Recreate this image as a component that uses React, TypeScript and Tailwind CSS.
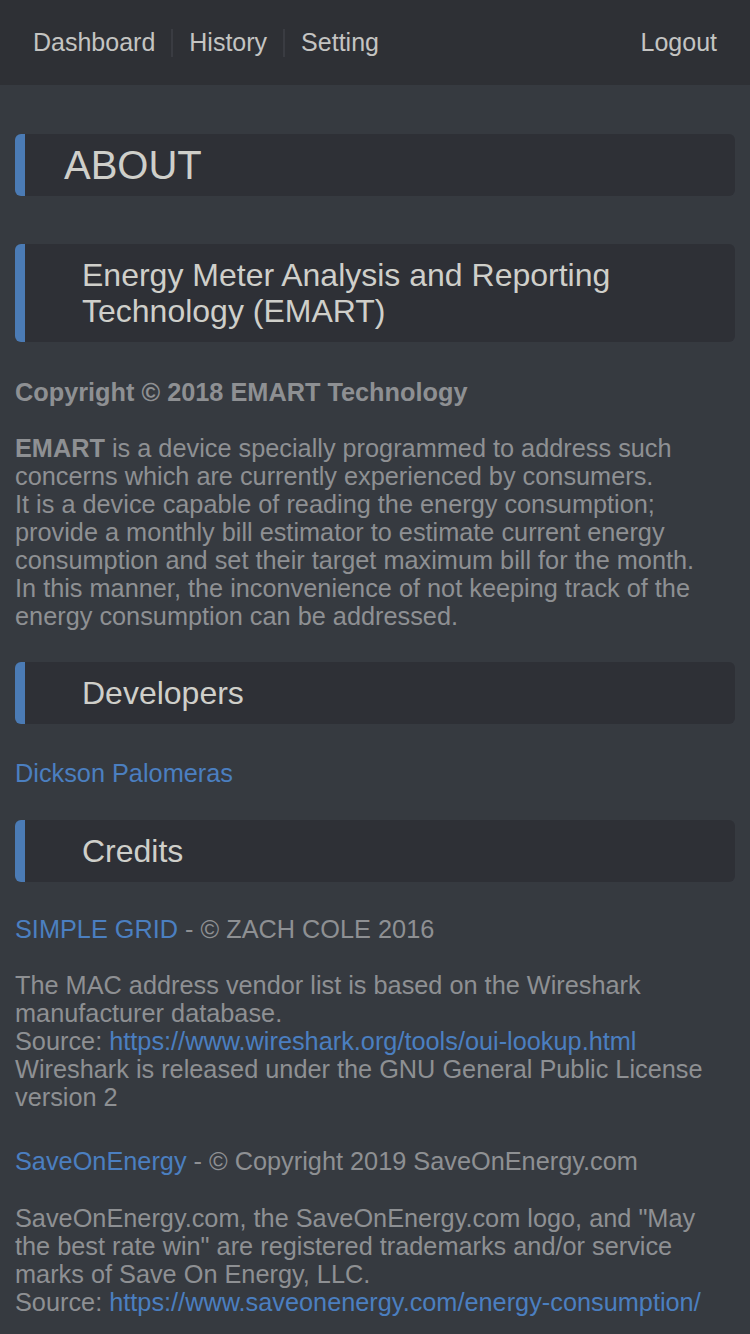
import React from 'react';

const Heading: React.FC<{ children: React.ReactNode; big?: boolean }> = ({ children, big }) => (
  <div
    className={`bg-[#2e3036] border-l-[10px] border-[#4b7bb5] rounded-md ${
      big ? 'pl-[39px] text-[40px] leading-[62px] h-[62px]' : 'pl-[57px] text-[32px] leading-[36px] py-[13px]'
    } text-[#cfcfca]`}
  >
    {children}
  </div>
);

const Link: React.FC<{ children: React.ReactNode }> = ({ children }) => (
  <a className="text-[#4b7fc0]">{children}</a>
);

const App: React.FC = () => {
  return (
    <div
      className="min-h-[1334px] bg-[#363a40] text-[#8e9093]"
      style={{ fontFamily: '"Liberation Sans", Arial, sans-serif' }}
    >
      <nav className="h-[85px] bg-[#2e3035] flex items-center justify-between pl-[33px] pr-[33px] text-[25px] text-[#c4c4c2]">
        <div className="flex items-center">
          <span>Dashboard</span>
          <span className="mx-[16px] w-[2px] h-[28px] bg-[#3a3c42]" />
          <span>History</span>
          <span className="mx-[16px] w-[2px] h-[28px] bg-[#3a3c42]" />
          <span>Setting</span>
        </div>
        <span>Logout</span>
      </nav>

      <main className="px-[15px] pt-[49px] pb-[20px] text-[25.3px] leading-[28px]">
        <Heading big>ABOUT</Heading>

        <div className="mt-[48px]">
          <Heading>
            Energy Meter Analysis and Reporting
            <br />
            Technology (EMART)
          </Heading>
        </div>

        <p className="mt-[36px] font-bold">Copyright © 2018 EMART Technology</p>

        <p className="mt-[28px] pr-[20px]">
          <b>EMART</b> is a device specially programmed to address such concerns which are currently
          experienced by consumers.
          <br />
          It is a device capable of reading the energy consumption; provide a monthly bill estimator to
          estimate current energy consumption and set their target maximum bill for the month. In this
          manner, the inconvenience of not keeping track of the energy consumption can be addressed.
        </p>

        <div className="mt-[32px]">
          <Heading>Developers</Heading>
        </div>

        <p className="mt-[35px]">
          <Link>Dickson Palomeras</Link>
        </p>

        <div className="mt-[33px]">
          <Heading>Credits</Heading>
        </div>

        <p className="mt-[33px]">
          <Link>SIMPLE GRID</Link> - © ZACH COLE 2016
        </p>

        <p className="mt-[28px] pr-[20px]">
          The MAC address vendor list is based on the Wireshark manufacturer database.
          <br />
          Source: <Link>https://www.wireshark.org/tools/oui-lookup.html</Link>
          <br />
          Wireshark is released under the GNU General Public License version 2
        </p>

        <p className="mt-[36px]">
          <Link>SaveOnEnergy</Link> - © Copyright 2019 SaveOnEnergy.com
        </p>

        <p className="mt-[29px] pr-[20px]">
          SaveOnEnergy.com, the SaveOnEnergy.com logo, and "May the best rate win" are registered
          trademarks and/or service marks of Save On Energy, LLC.
          <br />
          Source: <Link>https://www.saveonenergy.com/energy-consumption/</Link>
        </p>
      </main>
    </div>
  );
};

export default App;
